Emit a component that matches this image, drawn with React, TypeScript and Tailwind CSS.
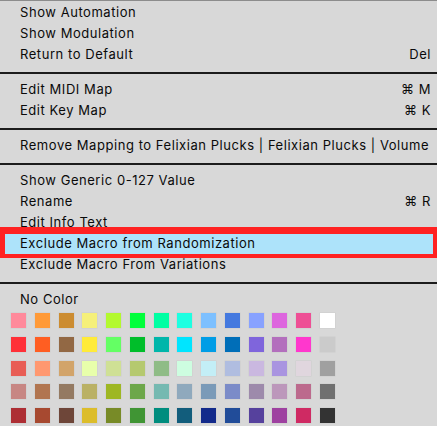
import React from "react";

type Item = { label: string; shortcut?: string; highlighted?: boolean };

const sections: Item[][] = [
  [
    { label: "Show Automation" },
    { label: "Show Modulation" },
    { label: "Return to Default", shortcut: "Del" },
  ],
  [
    { label: "Edit MIDI Map", shortcut: "⌘ M" },
    { label: "Edit Key Map", shortcut: "⌘ K" },
  ],
  [{ label: "Remove Mapping to Felixian Plucks | Felixian Plucks | Volume" }],
  [
    { label: "Show Generic 0-127 Value" },
    { label: "Rename", shortcut: "⌘ R" },
    { label: "Edit Info Text" },
    { label: "Exclude Macro from Randomization", highlighted: true },
    { label: "Exclude Macro From Variations" },
  ],
];

// clip colour palette, 5 rows x 14
const palette: string[][] = [
  ["#ff8a9b", "#ff9a38", "#cc8c31", "#f5f07a", "#b3f92f", "#00ff3b", "#00ffa3", "#1dffe1", "#7dc0ff", "#4479df", "#88a2ff", "#dd66de", "#ee4f95", "#ffffff"],
  ["#ff3038", "#ff5e22", "#926844", "#ffeb3a", "#64ff64", "#00be2a", "#00b6aa", "#00e5ff", "#009de6", "#006eb8", "#7f65dc", "#b36fbd", "#ff37cd", "#cbcbcb"],
  ["#e85d55", "#ff9870", "#d2a46a", "#e8ffab", "#cfe095", "#b5c96f", "#8fbc86", "#cdfde0", "#c3eef6", "#b0bde0", "#cab8e0", "#a994e0", "#e0d6de", "#a0a0a0"],
  ["#c78683", "#b17550", "#947a62", "#bab165", "#9eb723", "#6da74a", "#75b9b1", "#8fa9bd", "#7a9ab8", "#7b8bc8", "#9d8aab", "#bc97bb", "#bc6a8d", "#707070"],
  ["#ad2e34", "#a74930", "#6e4639", "#dcbd2b", "#788b27", "#409534", "#008d7e", "#125d7c", "#132a8b", "#214c99", "#56419d", "#9e41a0", "#cf2a63", "#333333"],
];

const Separator = () => (
  <div className="pt-[7px] pb-[5px]">
    <div className="h-[2px] bg-[#1c1c1c]" />
  </div>
);

const MenuRow: React.FC<{ item: Item }> = ({ item }) => (
  <div
    className={`relative flex h-[21px] items-center justify-between pl-5 pr-[6px] ${
      item.highlighted ? "bg-[#ade3fa]" : ""
    }`}
  >
    <span>{item.label}</span>
    {item.shortcut && <span>{item.shortcut}</span>}
    {item.highlighted && (
      <div className="pointer-events-none absolute -top-[6.5px] -bottom-[3.5px] left-0 right-0 border-[5px] border-t-[7px] border-r-[4px] border-b-[4px] border-[#ff2222]" />
    )}
  </div>
);

export default function App() {
  return (
    <div
      className="h-[426px] w-[437px] overflow-hidden border-t border-[#8c8c8c] bg-[#d8d8d8] pt-px text-[13px] tracking-[0.55px] text-[#0a0a0a]"
      style={{ fontFamily: "Inter, 'DejaVu Sans', sans-serif" }}
    >
      {sections.map((section, i) => (
        <div key={i}>
          {section.map((item) => (
            <MenuRow key={item.label} item={item} />
          ))}
          <Separator />
        </div>
      ))}
      <div className="flex h-[21px] items-center pl-5">No Color</div>
      <div className="mt-[3px] flex flex-col gap-y-[8.8px] pl-[11px]">
        {palette.map((row, r) => (
          <div key={r} className="flex gap-x-[8.77px]">
            {row.map((c, j) => (
              <div
                key={j}
                className="h-[15px] w-[15px] shadow-[0_0_0_0.5px_rgba(0,0,0,0.06)]"
                style={{ backgroundColor: c }}
              />
            ))}
          </div>
        ))}
      </div>
    </div>
  );
}
